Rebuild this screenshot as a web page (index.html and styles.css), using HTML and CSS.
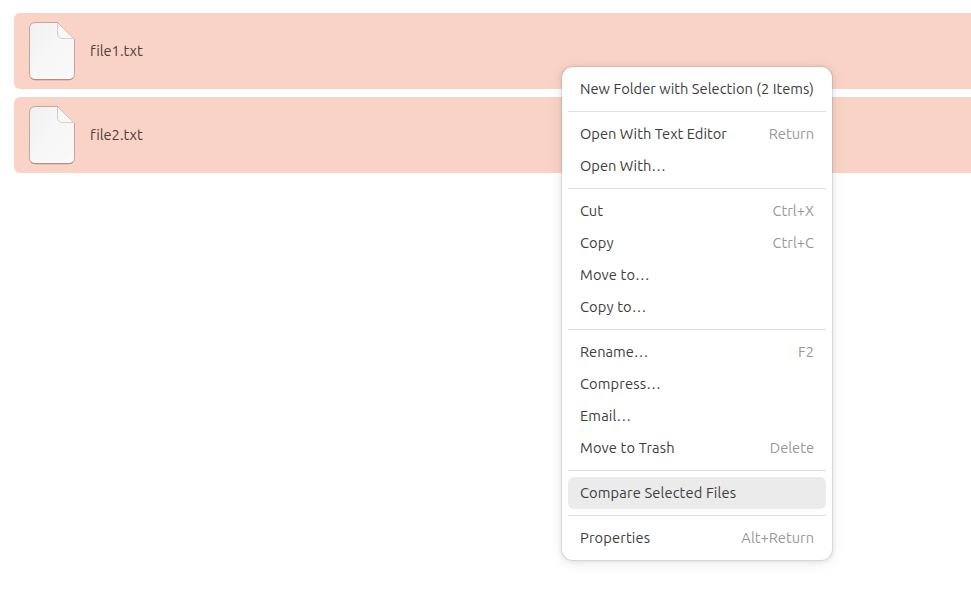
FILE: index.html
```html
<!DOCTYPE html>
<html lang="en">
<head>
<meta charset="utf-8">
<title>Files</title>
<link rel="stylesheet" href="styles.css">
</head>
<body>
<svg width="0" height="0" class="defs" aria-hidden="true">
  <defs>
    <linearGradient id="paper" x1="0" y1="0" x2="1" y2="1"><stop offset="0" stop-color="#f1f1f1"/><stop offset=".5" stop-color="#f7f7f7"/><stop offset=".85" stop-color="#f8f8f8"/><stop offset="1" stop-color="#fcfcfc"/></linearGradient>
    <symbol id="doc" viewBox="0 0 48 60">
      <path d="M7.500 1.500H29.500L46.500 18.500V52.500Q46.500 58.500 40.500 58.500H7.500Q1.500 58.500 1.500 52.500V7.500Q1.500 1.500 7.500 1.500Z" fill="none" stroke="#704f45" stroke-opacity=".36"/>
      <path d="M7.500 2H29.500L46 18.500V52Q46 58 40 58H8Q2 58 2 52V8Q2 2 8 2Z" fill="url(#paper)"/>
      <path d="M29.500 2V12Q29.500 18 35.500 18H46Z" fill="#faf8f5"/>
      <path d="M29.500 2V12Q29.500 17.500 35 17.500H45.500" fill="none" stroke="#d3d0cd"/>
      <path d="M3 57.300Q5 58.900 8 58.900H40Q43 58.900 45 57.300" fill="none" stroke="#704f45" stroke-opacity=".4"/>
    </symbol>
  </defs>
</svg>
<main class="list">
  <div class="row"><svg class="icon"><use href="#doc"/></svg><span class="name">file1.txt</span></div>
  <div class="row"><svg class="icon"><use href="#doc"/></svg><span class="name">file2.txt</span></div>
</main>
<div class="menu" role="menu">
  <div class="item"><span class="snug">New Folder with Selection (2 Items)</span></div>
  <hr>
  <div class="item"><span>Open With Text Editor</span><kbd>Return</kbd></div>
  <div class="item"><span>Open With…</span></div>
  <hr>
  <div class="item"><span>Cut</span><kbd>Ctrl+X</kbd></div>
  <div class="item"><span class="loose">Copy</span><kbd>Ctrl+C</kbd></div>
  <div class="item"><span class="loose">Move to…</span></div>
  <div class="item"><span class="loose">Copy to…</span></div>
  <hr>
  <div class="item"><span>Rename…</span><kbd>F2</kbd></div>
  <div class="item"><span class="loose">Compress…</span></div>
  <div class="item"><span class="loose">Email…</span></div>
  <div class="item"><span class="loose">Move to Trash</span><kbd>Delete</kbd></div>
  <hr>
  <div class="item active"><span class="loose">Compare Selected Files</span></div>
  <hr>
  <div class="item"><span class="loose">Properties</span><kbd>Alt+Return</kbd></div>
</div>
</body>
</html>
```
FILE: styles.css
```css
* { box-sizing: border-box; }
body {
  margin: 0;
  height: 614px;
  overflow: hidden;
  background: #fff;
  color: #3d3d3d;
  font: 14.667px/20px Ubuntu, "Noto Sans", sans-serif;
  font-variant-ligatures: none;
}
.defs { position: absolute; }
.list { display: flex; flex-direction: column; gap: 8px; padding: 13px 0 0 14px; }
.row {
  display: flex;
  align-items: center;
  gap: 14px;
  height: 76px;
  padding-left: 14px;
  background: #fad3c7;
  border-radius: 6px 0 0 6px;
}
.icon { width: 48px; height: 60px; }
.name { color: #4b403c; }
.menu {
  position: absolute;
  left: 562px;
  top: 67px;
  width: 270px;
  padding: 6px;
  background: #fff;
  border-radius: 11px;
  box-shadow: 0 0 0 1px rgba(0,0,0,.07), 0 1px 5px 1px rgba(0,0,0,.09), 0 2px 14px 3px rgba(0,0,0,.05);
}
.item {
  display: flex;
  align-items: center;
  justify-content: space-between;
  height: 32px;
  padding: 0 12px;
  border-radius: 6px;
  white-space: nowrap;
}
.item.active { background: #ebebeb; }
.snug { letter-spacing: .03px; }
.loose { letter-spacing: .14px; }
kbd { font: inherit; color: #989898; }
hr { height: 1px; margin: 6px 0; border: 0; background: #dedede; }
```
